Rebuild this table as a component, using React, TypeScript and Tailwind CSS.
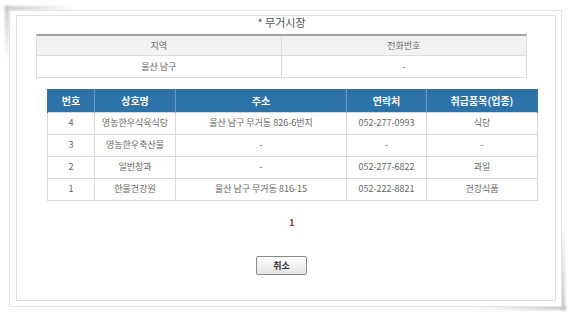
import React from 'react';

const SHOPS = [
  { no: '4', name: '영농한우식육식당', addr: '울산 남구 무거동 826-6번지', tel: '052-277-0993', item: '식당' },
  { no: '3', name: '영농한우축산물', addr: '-', tel: '-', item: '-' },
  { no: '2', name: '일번청과', addr: '-', tel: '052-277-6822', item: '과일' },
  { no: '1', name: '한울건강원', addr: '울산 남구 무거동 816-15', tel: '052-222-8821', item: '건강식품' },
];

const HEADS = ['번호', '상호명', '주소', '연락처', '취급품목(업종)'];
const WIDTHS = ['w-[47px]', 'w-[81px]', 'w-[171px]', 'w-[80px]', 'w-[111px]'];

export default function App() {
  return (
    <div className="w-[572px] h-[316px] bg-white overflow-hidden relative font-['Noto_Sans_CJK_KR',sans-serif]">
      {/* corner shadows */}
      <div className="absolute left-[5px] top-[6px] w-[70px] h-[4px] bg-gradient-to-r from-[#c8c8c8] to-transparent blur-[1px]" />
      <div className="absolute left-[5px] top-[6px] w-[4px] h-[55px] bg-gradient-to-b from-[#c8c8c8] to-transparent blur-[1px]" />
      <div className="absolute left-[470px] top-[306px] w-[96px] h-[4px] bg-gradient-to-r from-transparent to-[#c8c8c8] blur-[1px]" />
      <div className="absolute left-[561px] top-[220px] w-[4px] h-[90px] bg-gradient-to-b from-transparent to-[#c8c8c8] blur-[1px]" />

      <div className="relative ml-[9px] mt-[10px] w-[553px] h-[297px] border border-[#e3e3e3] bg-white pt-[4px] pl-[6px] pr-[5px] pb-[5px]">
        <div className="h-full border border-[#e0e0e0] overflow-hidden">
          <div className="ml-[19px] w-[491px] -mt-[2px] h-[20px] text-center text-[11px] leading-[16px] text-[#555]">
            * 무거시장
          </div>

          <div className="ml-[19px] w-[491px] border-t-2 border-[#a0a0a0] border-x border-b border-x-[#dcdcdc] border-b-[#dcdcdc] text-[9px] text-[#666]">
            <div className="grid grid-cols-2 bg-[#f2f2f2] h-[20px] border-b border-[#dcdcdc]">
              <div className="flex items-center justify-center border-r border-[#dcdcdc]">지역</div>
              <div className="flex items-center justify-center">전화번호</div>
            </div>
            <div className="grid grid-cols-2 h-[21px]">
              <div className="flex items-center justify-center border-r border-[#dcdcdc]">울산 남구</div>
              <div className="flex items-center justify-center">-</div>
            </div>
          </div>

          <table className="ml-[30px] mt-[11px] w-[490px] table-fixed border-collapse text-[9px] text-[#666]">
            <thead>
              <tr className="h-[23px] bg-[#2b73a8] text-white text-[10px] font-bold">
                {HEADS.map((h, i) => (
                  <th key={h} className={`${WIDTHS[i]} border-x border-[#6a9cc4] first:border-l-[#2b73a8] last:border-r-[#2b73a8] font-bold`}>
                    {h}
                  </th>
                ))}
              </tr>
            </thead>
            <tbody>
              {SHOPS.map(s => (
                <tr key={s.no} className="h-[22px]">
                  <td className="border border-[#d8d8d8] text-center">{s.no}</td>
                  <td className="border border-[#d8d8d8] text-center">{s.name}</td>
                  <td className="border border-[#d8d8d8] text-center">{s.addr}</td>
                  <td className="border border-[#d8d8d8] text-center">{s.tel}</td>
                  <td className="border border-[#d8d8d8] text-center">{s.item}</td>
                </tr>
              ))}
            </tbody>
          </table>

          <div className="ml-[30px] w-[490px] mt-[16px] text-center text-[9px] font-bold text-[#7a3b3b] leading-[12px]">1</div>

          <div className="ml-[19px] w-[491px] mt-[27px] flex justify-center">
            <button className="w-[51px] h-[19px] rounded-[2px] border border-[#8a8a8a] bg-gradient-to-b from-white to-[#e4e4e4] text-[9px] font-bold text-[#333] leading-none">
              취소
            </button>
          </div>
        </div>
      </div>
    </div>
  );
}
